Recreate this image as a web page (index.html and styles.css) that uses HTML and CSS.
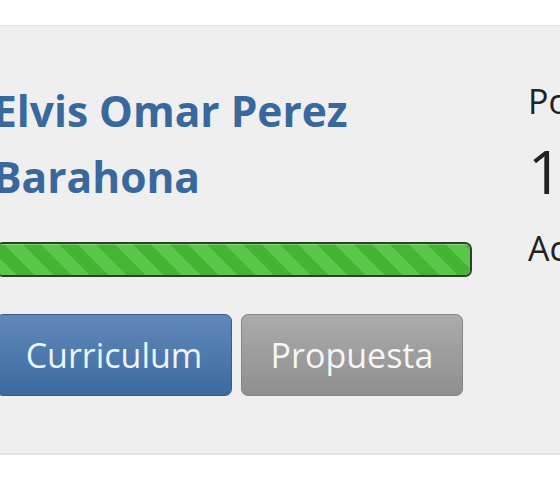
FILE: index.html
```html
<!DOCTYPE html>
<html lang="es">
<head>
    <meta charset="UTF-8">
    <meta name="viewport" content="width=device-width, initial-scale=1.0">
    <title>Candidato</title>
    <link rel="stylesheet" href="styles.css">
</head>
<body>
    <div class="top"></div>

    <div class="panel">
        <!-- Columna del candidato -->
        <div class="candidate">
            <h2 class="name">Elvis Omar Perez Barahona</h2>

            <div class="progress">
                <div class="progress-bar" style="width: 100%"></div>
            </div>

            <div class="actions">
                <button type="button" class="btn btn-blue">Curriculum</button>
                <button type="button" class="btn btn-gray">Propuesta</button>
            </div>
        </div>

        <!-- Columna de posición -->
        <div class="stats">
            <p class="stat-label">Posición</p>
            <p class="stat-value">1</p>
            <p class="stat-label stat-sub">Actual</p>
        </div>
    </div>
</body>
</html>
```

FILE: styles.css
```css
* {
    margin: 0;
    padding: 0;
    box-sizing: border-box;
    font-family: 'Open Sans', sans-serif;
}

html,
body {
    width: 560px;
    height: 480px;
    overflow: hidden;
    background-color: #ffffff;
}

.top {
    height: 25px;
}

.panel {
    display: flex;
    width: 640px;
    height: 430px;
    margin-left: -4px;
    padding-top: 52px;
    background-color: #efefef;
    border-top: 1px solid #e4e4e4;
    border-bottom: 2px solid #e2e2e2;
}

.candidate {
    width: 476px;
    flex-shrink: 0;
}

.name {
    width: 400px;
    margin-left: -3px;
    color: #39689c;
    font-size: 42.5px;
    font-weight: 700;
    line-height: 66px;
}

.progress {
    height: 35px;
    margin-top: 32px;
    border: 2px solid #2a4327;
    border-radius: 7px;
    background-color: #4cbb3c;
    overflow: hidden;
}

.progress-bar {
    height: 100%;
    background: repeating-linear-gradient(45deg,
        #5ac74b 0, #5ac74b 13px,
        #44b533 13px, #44b533 26px);
    box-shadow: inset 0 1px 0 rgba(255, 255, 255, 0.3);
}

.actions {
    display: flex;
    gap: 9px;
    margin-top: 37px;
}

.btn {
    height: 82px;
    border-radius: 7px;
    font-size: 34px;
    font-weight: 400;
    cursor: pointer;
}

.btn-blue {
    width: 236px;
    color: #eaf5ff;
    background: linear-gradient(#6089ba, #3c6a9f);
    border: 1px solid #365e8c;
}

.btn-gray {
    width: 222px;
    color: #f6f6f6;
    background: linear-gradient(#ababab, #8f8f8f);
    border: 1px solid #858585;
}

.stats {
    margin-left: 56px;
    color: #222222;
    white-space: nowrap;
}

.stat-label {
    font-size: 34px;
    line-height: 46px;
}

.stat-value {
    font-size: 60px;
    line-height: 82px;
    margin-top: 6px;
}

.stat-sub {
    margin-top: 13px;
}
```
